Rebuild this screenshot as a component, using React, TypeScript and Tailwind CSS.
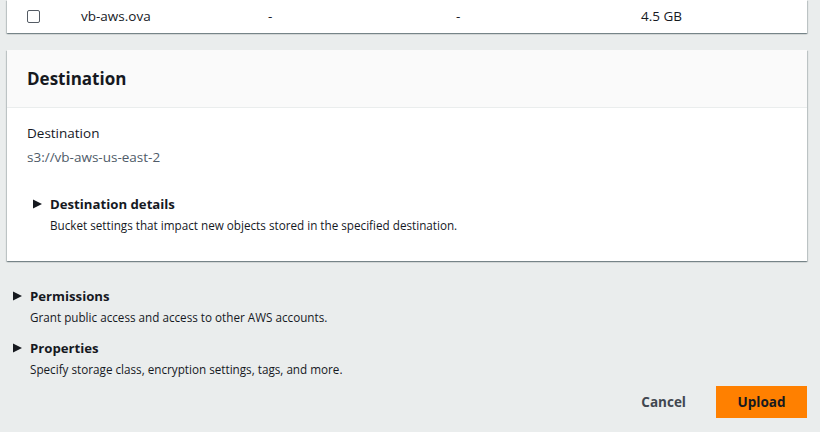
import React from 'react';

const Caret: React.FC = () => (
    <svg className="w-[9px] h-[10px] shrink-0" viewBox="0 0 9 10" fill="#16191f">
        <path d="M0 0.5 L9 5 L0 9.5 Z" />
    </svg>
);

const Expandable: React.FC<{ title: string; description: string }> = ({ title, description }) => (
    <div>
        <div className="flex items-center gap-[8px]">
            <Caret />
            <span className="text-[13.2px] font-bold leading-[20px] text-[#16191f]">{title}</span>
        </div>
        <p className="pl-[17px] mt-[2px] text-[11.7px] leading-[18px] text-[#16191f]">{description}</p>
    </div>
);

const cardShadow =
    'shadow-[0_1px_1px_0_rgba(0,28,36,0.3),1px_1px_1px_0_rgba(0,28,36,0.15),-1px_1px_1px_0_rgba(0,28,36,0.15)]';

const App: React.FC = () => {
    return (
        <div
            className="w-[820px] h-[432px] overflow-hidden bg-[#eaeded] text-[#16191f]"
            style={{ fontFamily: '"Open Sans", "Liberation Sans", sans-serif' }}
        >
            {/* Files table (last row) */}
            <div className={`mx-[7px] w-[800px] bg-white ${cardShadow}`}>
                <div className="flex items-center h-[33px] text-[13.5px]">
                    <div className="w-[74px] pl-[20px]">
                        <div className="w-[13px] h-[13px] border border-[#545b64] rounded-[2px] bg-white" />
                    </div>
                    <div className="w-[187px]">vb-aws.ova</div>
                    <div className="w-[188px]">-</div>
                    <div className="w-[185px]">-</div>
                    <div>4.5 GB</div>
                </div>
            </div>

            {/* Destination card */}
            <div className={`mx-[7px] mt-[17px] w-[800px] h-[211px] bg-white ${cardShadow}`}>
                <div className="h-[58px] flex items-center px-[20px] bg-[#fafafa] border-b border-[#eaeded]">
                    <h2 className="text-[17px] font-bold leading-[22px]">Destination</h2>
                </div>
                <div className="px-[20px] pt-[15px]">
                    <div className="text-[13.5px] leading-[20px]">Destination</div>
                    <div className="mt-[4px] text-[13.5px] leading-[20px] text-[#4f5b69]">s3://vb-aws-us-east-2</div>
                    <div className="mt-[27px] pl-[6px]">
                        <Expandable
                            title="Destination details"
                            description="Bucket settings that impact new objects stored in the specified destination."
                        />
                    </div>
                </div>
            </div>

            {/* Other settings */}
            <div className="mt-[25px] pl-[13px] flex flex-col gap-[12px]">
                <Expandable title="Permissions" description="Grant public access and access to other AWS accounts." />
                <Expandable title="Properties" description="Specify storage class, encryption settings, tags, and more." />
            </div>

            {/* Actions */}
            <div className="mt-[8px] flex justify-end items-center gap-[8px] pr-[13px]">
                <button className="px-[22px] h-[32px] text-[13.5px] font-bold text-[#414750]">Cancel</button>
                <button className="w-[91px] h-[32px] bg-[#ff8000] text-[13.5px] font-bold text-[#16191f]">Upload</button>
            </div>
        </div>
    );
};

export default App;
